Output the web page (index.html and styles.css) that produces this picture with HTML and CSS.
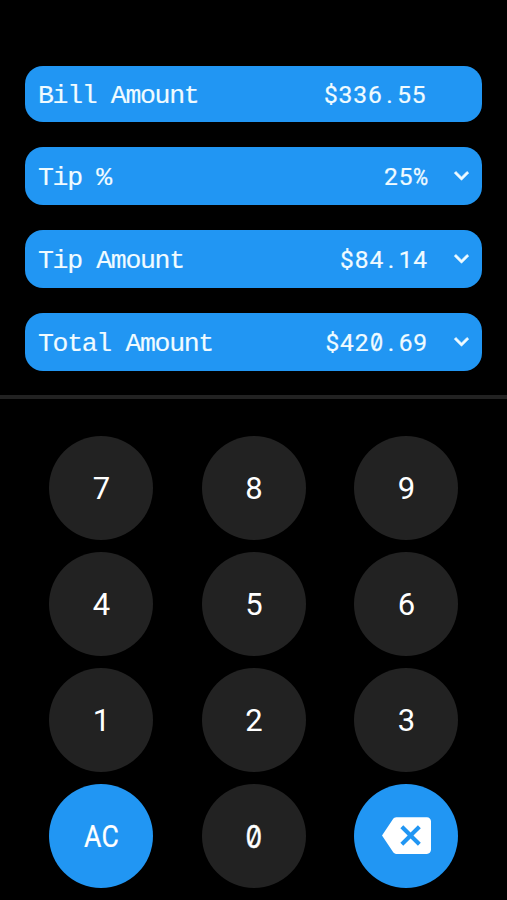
FILE: index.html
```html
<!DOCTYPE html>
<html lang="en">
<head>
    <meta charset="utf-8">
    <meta name="viewport" content="width=device-width, initial-scale=1">
    <title>Tip Calculator</title>
    <link rel="stylesheet" href="styles.css">
</head>
<body>

<div class="fields">
    <div class="field bill">
        <span class="label">Bill Amount</span>
        <span class="value">$336<span class="point">.</span>55</span>
    </div>
    <div class="field">
        <span class="label">Tip %</span>
        <span class="value">25<span class="percent">%</span></span>
        <svg class="chevron" viewBox="0 0 24 24"><path d="M16.59 8.59L12 13.17 7.41 8.59 6 10l6 6 6-6z"/></svg>
    </div>
    <div class="field">
        <span class="label">Tip Amount</span>
        <span class="value">$84<span class="point">.</span>14</span>
        <svg class="chevron" viewBox="0 0 24 24"><path d="M16.59 8.59L12 13.17 7.41 8.59 6 10l6 6 6-6z"/></svg>
    </div>
    <div class="field">
        <span class="label">Total Amount</span>
        <span class="value">$42<span class="zero">0</span><span class="point">.</span>69</span>
        <svg class="chevron" viewBox="0 0 24 24"><path d="M16.59 8.59L12 13.17 7.41 8.59 6 10l6 6 6-6z"/></svg>
    </div>
</div>

<div class="divider"></div>

<div class="keypad">
    <button class="key">7</button>
    <button class="key">8</button>
    <button class="key">9</button>
    <button class="key">4</button>
    <button class="key">5</button>
    <button class="key">6</button>
    <button class="key">1</button>
    <button class="key">2</button>
    <button class="key">3</button>
    <button class="key action"><span class="clear">AC</span></button>
    <button class="key"><span class="zero">0</span></button>
    <button class="key action" aria-label="Backspace">
        <svg class="backspace" viewBox="0 0 24 24">
            <path d="M22 3H7c-.69 0-1.23.35-1.59.88L0 12l5.41 8.11c.36.53.9.89 1.59.89h15c1.1 0 2-.9 2-2V5c0-1.1-.9-2-2-2zm-3 12.59L17.59 17 14 13.41 10.41 17 9 15.59 12.59 12 9 8.41 10.41 7 14 10.59 17.59 7 19 8.41 15.41 12 19 15.59z"/>
        </svg>
    </button>
</div>

</body>
</html>
```

FILE: styles.css
```css
* {
    box-sizing: border-box;
}

body {
    margin: 0;
    height: 900px;
    overflow: hidden;
    background-color: #000;
    color: #fff;
    font-family: Roboto, sans-serif;
}

.fields {
    display: flex;
    flex-direction: column;
    gap: 24.5px;
    padding: 66px 25px 24px 25px;
}

.field {
    display: flex;
    align-items: center;
    height: 58.5px;
    padding: 2px 6px 0 13px;
    border-radius: 18px;
    background-color: #2196f3;
    color: #f0fbff;
}

.bill {
    height: 56px;
    padding-right: 55.5px;
}

.label {
    flex: 1;
    padding-top: 2px;
    font-family: "Liberation Mono", monospace;
    font-size: 26.5px;
    letter-spacing: -1.33px;
    line-height: 30px;
    -webkit-text-stroke: 0.15px;
}

.value {
    font-size: 24.5px;
    letter-spacing: 0.9px;
    line-height: 30px;
    -webkit-text-stroke: 0.2px;
}

.point {
    display: inline-block;
    width: 14.6px;
    text-align: center;
}

.percent {
    display: inline-block;
    width: 14.6px;
    transform: scaleX(.84);
    transform-origin: left;
    -webkit-text-stroke: 0.4px;
}

.zero {
    display: inline-block;
    font-family: Inter, sans-serif;
    font-feature-settings: "zero";
    transform: scaleX(.85);
    -webkit-text-stroke: 0.4px;
}

.value .zero {
    width: 14.6px;
    letter-spacing: 0;
}

.chevron {
    width: 29px;
    height: 29px;
    margin-left: 19px;
    margin-top: -2px;
    fill: currentColor;
    stroke: currentColor;
    stroke-width: 0.5;
}

.divider {
    height: 4px;
    background-color: #222;
}

.keypad {
    display: grid;
    grid-template-columns: repeat(3, 104px);
    column-gap: 48.5px;
    row-gap: 12px;
    padding: 36.7px 0 0 49.4px;
}

.key {
    display: flex;
    align-items: center;
    justify-content: center;
    width: 104px;
    height: 104px;
    padding: 2px 0 0;
    border: none;
    border-radius: 50%;
    background-color: #222;
    color: #fff;
    font-family: Roboto, sans-serif;
    font-size: 31px;
    cursor: pointer;
}

.action {
    background-color: #2196f3;
}

.clear {
    transform: scaleX(.86);
    letter-spacing: 0.5px;
    -webkit-text-stroke: 0.2px;
}

.backspace {
    width: 49px;
    height: 49px;
    margin-top: -2px;
    fill: #fff;
}
```
